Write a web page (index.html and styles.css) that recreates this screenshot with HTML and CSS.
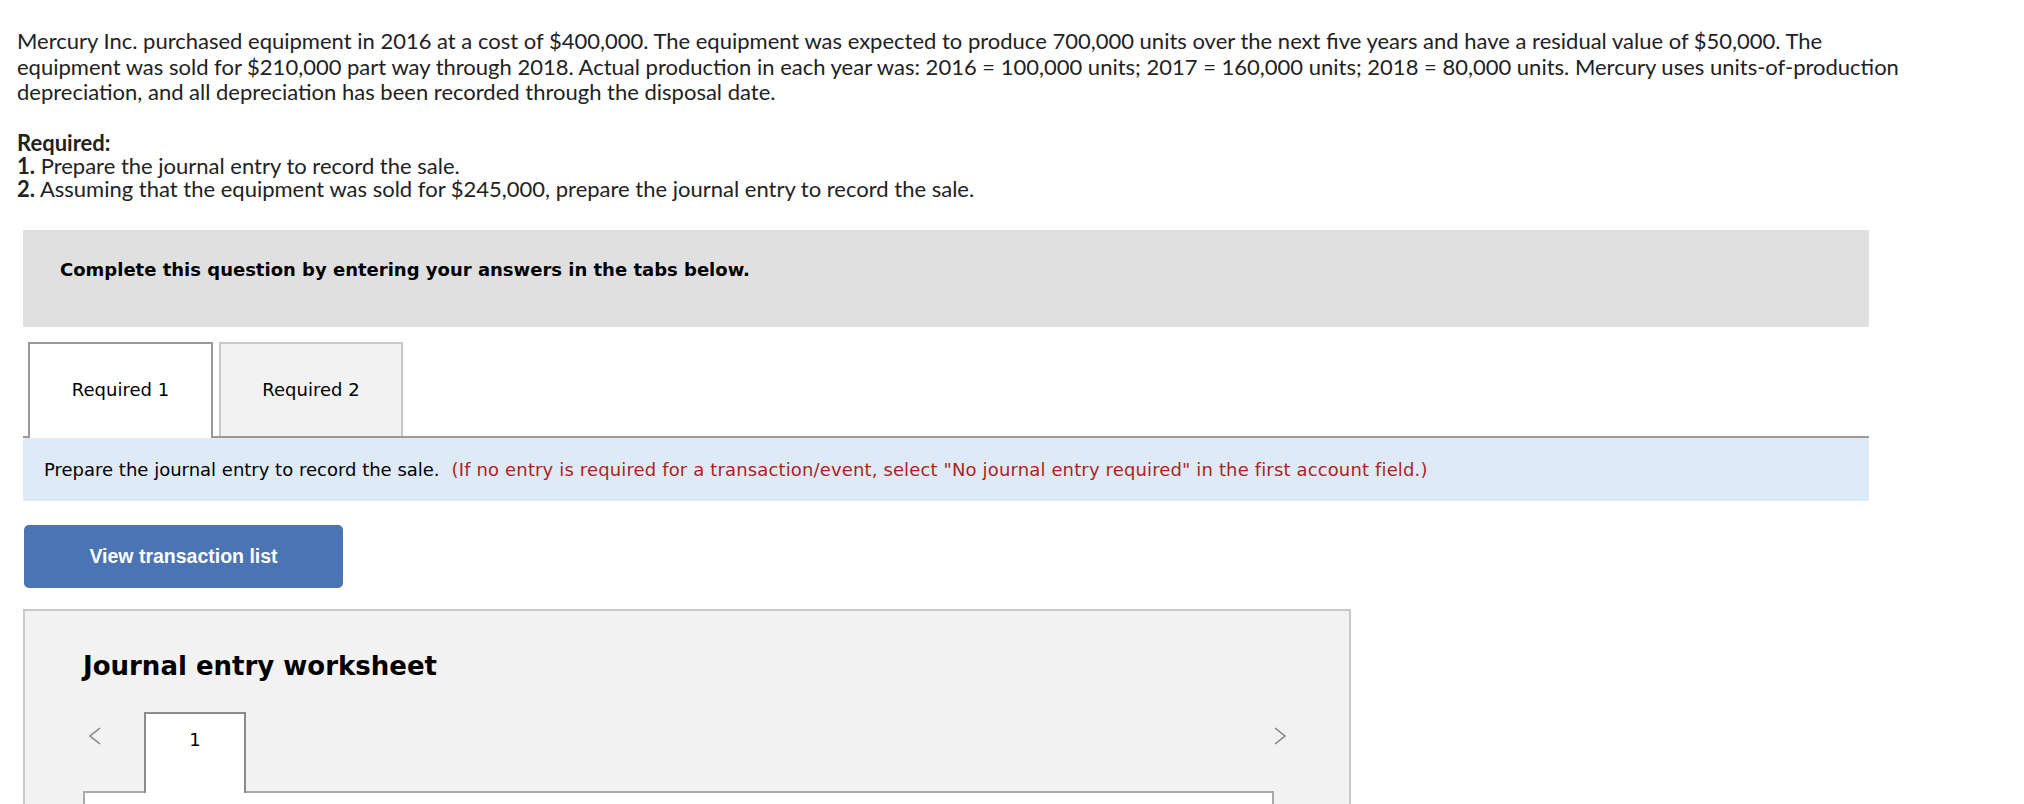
FILE: index.html
```html
<!DOCTYPE html>
<html>
<head>
<meta charset="utf-8">
<link rel="stylesheet" href="styles.css">
</head>
<body>
<div class="page">
  <div class="question">
    <p class="stem">Mercury Inc. purchased equipment in 2016 at a cost of $400,000. The equipment was expected to produce 700,000 units over the next five years and have a residual value of $50,000. The equipment was sold for $210,000 part way through 2018. Actual production in each year was: 2016 = 100,000 units; 2017 = 160,000 units; 2018 = 80,000 units. Mercury uses units-of-production depreciation, and all depreciation has been recorded through the disposal date.</p>
    <div class="required">
      <p class="req-title">Required:</p>
      <p><b>1.</b> Prepare the journal entry to record the sale.</p>
      <p><b>2.</b> Assuming that the equipment was sold for $245,000, prepare the journal entry to record the sale.</p>
    </div>
  </div>

  <div class="prompt-box">Complete this question by entering your answers in the tabs below.</div>

  <div class="tabs">
    <div class="tab active">Required 1</div>
    <div class="tab">Required 2</div>
  </div>

  <div class="instruction">Prepare the journal entry to record the sale.<span class="hint">(If no entry is required for a transaction/event, select "No journal entry required" in the first account field.)</span></div>

  <button class="view-btn">View transaction list</button>

  <div class="worksheet">
    <h2 class="ws-title">Journal entry worksheet</h2>
    <div class="ws-nav">
      <span class="chev chev-left"><svg width="14" height="18" viewBox="0 0 14 18"><polyline points="12,1 2,9 12,17" fill="none" stroke="#858585" stroke-width="1.6"/></svg></span>
      <div class="ws-tabs">
        <div class="ws-tab">1</div>
      </div>
      <span class="chev chev-right"><svg width="14" height="18" viewBox="0 0 14 18"><polyline points="2,1 12,9 2,17" fill="none" stroke="#858585" stroke-width="1.6"/></svg></span>
    </div>
    <div class="ws-body"></div>
  </div>
</div>
</body>
</html>
```

FILE: styles.css
```css
html, body {
  margin: 0;
  padding: 0;
  background: #ffffff;
}

.page {
  width: 1852px;
  padding: 0 0 0 17px;
}

.question {
  font-family: Lato, "Open Sans", sans-serif;
  color: #222222;
  font-size: 22px;
  padding-top: 28px;
  width: 1910px;
}

.question p {
  margin: 0;
}

.stem {
  line-height: 25.5px;
}

.required {
  margin-top: 26px;
  line-height: 23px;
}

.required b,
.req-title {
  font-weight: 700;
}

.prompt-box {
  margin: 30px 0 0 6px;
  height: 97px;
  box-sizing: border-box;
  padding: 29px 37px 0;
  background: #e0e0e0;
  font-family: "DejaVu Sans", Verdana, sans-serif;
  font-weight: 700;
  font-size: 18px;
  color: #000;
}

.tabs {
  display: flex;
  gap: 6px;
  margin: 15px 0 0 6px;
  border-bottom: 2px solid #999999;
  padding-left: 5px;
}

.tab {
  width: 184px;
  height: 94px;
  box-sizing: border-box;
  display: flex;
  align-items: center;
  justify-content: center;
  font-family: "DejaVu Sans", Verdana, sans-serif;
  font-size: 18px;
  color: #000;
  background: #f2f2f2;
  border: 2px solid #c8c8c8;
  border-bottom: none;
}

.tab.active {
  width: 185px;
  background: #ffffff;
  border: 2px solid #999999;
  border-bottom: none;
  height: 96px;
  margin-bottom: -2px;
  padding-bottom: 2px;
}

.instruction {
  margin-left: 6px;
  height: 63px;
  box-sizing: border-box;
  padding: 0 21px;
  display: flex;
  align-items: center;
  background: #deebf7;
  font-family: "DejaVu Sans", Verdana, sans-serif;
  font-size: 18px;
  color: #000;
  white-space: nowrap;
}

.hint {
  color: #b11e1e;
  margin-left: 12px;
  letter-spacing: 0.14px;
}

.view-btn {
  display: block;
  margin: 24px 0 0 7px;
  width: 319px;
  height: 63px;
  border: none;
  border-radius: 5px;
  background: #4a74b3;
  color: #ffffff;
  font-family: "Liberation Sans", Arial, sans-serif;
  font-weight: 700;
  font-size: 19.5px;
  padding: 0;
}

.worksheet {
  margin: 21px 0 0 6px;
  width: 1328px;
  height: 220px;
  box-sizing: border-box;
  background: #f2f2f2;
  border: 2px solid #c8c8c8;
  padding: 0 62px 0 58px;
}

.ws-title {
  margin: 40px 0 0;
  line-height: 30px;
  font-family: "DejaVu Sans", Verdana, sans-serif;
  font-weight: 700;
  font-size: 26px;
  color: #000;
}

.ws-nav {
  display: flex;
  align-items: stretch;
  margin-top: 31px;
  height: 79px;
}

.chev {
  display: flex;
  align-items: flex-start;
  padding-top: 15px;
}

.chev-left {
  width: 56px;
  padding-left: 5px;
}

.ws-tabs {
  flex: 1;
  display: flex;
}

.ws-tab {
  width: 102px;
  box-sizing: border-box;
  background: #fff;
  border: 2px solid #8c8c8c;
  border-bottom: none;
  font-family: "DejaVu Sans", Verdana, sans-serif;
  font-size: 18px;
  line-height: 21px;
  text-align: center;
  padding-top: 15px;
  color: #000;
  position: relative;
  z-index: 1;
  margin-bottom: -2px;
}

.ws-body {
  width: 1191px;
  height: 60px;
  box-sizing: border-box;
  background: #fff;
  border-top: 2px solid #aaaaaa;
  border-left: 2px solid #aaaaaa;
  border-right: 2px solid #aaaaaa;
}
```
